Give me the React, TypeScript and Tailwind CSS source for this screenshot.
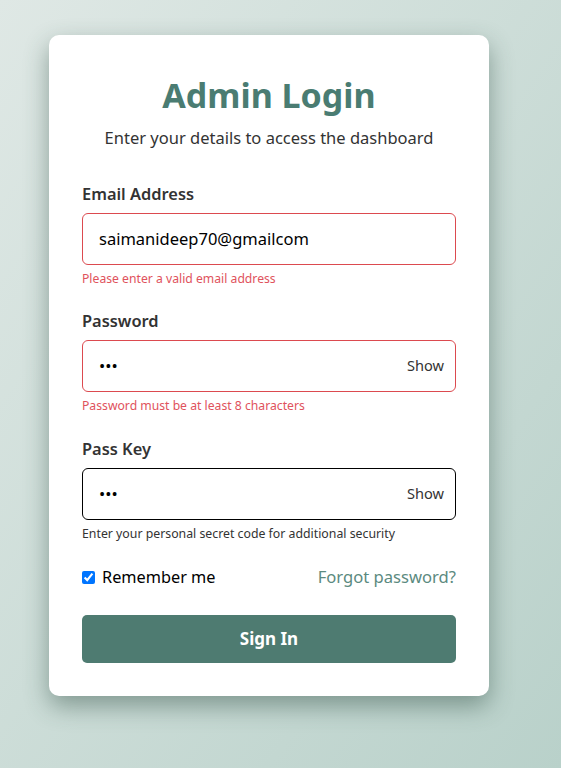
import React from "react";

export default function App() {
  const font = { fontFamily: '"Segoe UI", "Noto Sans", "Open Sans", sans-serif' };
  return (
    <div
      className="min-h-[768px] w-full bg-gradient-to-br from-[#dfe8e5] to-[#b9d1ca] pt-[35px] pl-[49px]"
      style={font}
    >
      <div className="w-[440px] rounded-[10px] bg-white px-[33px] pt-[38px] pb-[33px] shadow-[0_10px_25px_rgba(40,70,60,0.45)]">
        <h1 className="text-center text-[34px] leading-[44px] font-bold text-[#4a7c72]">Admin Login</h1>
        <p className="mt-[8px] text-center text-[16.5px] leading-[26px] text-[#333]">
          Enter your details to access the dashboard
        </p>

        <div className="mt-[32px]">
          <label className="block text-[16.4px] leading-[22px] font-semibold text-[#333]">Email Address</label>
          <div className="mt-[8px] flex h-[52px] items-center rounded-[6px] border border-[#dc4a4f] px-[16px]">
            <input
              readOnly
              value="saimanideep70@gmailcom"
              className="w-full bg-transparent text-[16.5px] text-black outline-none"
            />
          </div>
          <p className="mt-[6px] text-[12.2px] leading-[16px] text-[#e0525c]">Please enter a valid email address</p>
        </div>

        <div className="mt-[23px]">
          <label className="block text-[16.4px] leading-[22px] font-semibold text-[#333]">Password</label>
          <div className="mt-[8px] flex h-[52px] items-center rounded-[6px] border border-[#dc4a4f] pl-[16px] pr-[11px]">
            <input
              readOnly
              type="password"
              value="abc"
              className="w-full bg-transparent text-[16.5px] text-black outline-none"
            />
            <span className="text-[14.6px] text-[#333]">Show</span>
          </div>
          <p className="mt-[6px] text-[12.2px] leading-[16px] text-[#e0525c]">Password must be at least 8 characters</p>
        </div>

        <div className="mt-[24px]">
          <label className="block text-[16.4px] leading-[22px] font-semibold text-[#333]">Pass Key</label>
          <div className="mt-[8px] flex h-[52px] items-center rounded-[6px] border border-black pl-[16px] pr-[11px]">
            <input
              readOnly
              type="password"
              value="abc"
              className="w-full bg-transparent text-[16.5px] text-black outline-none"
            />
            <span className="text-[14.6px] text-[#333]">Show</span>
          </div>
          <p className="mt-[6px] text-[12.3px] leading-[16px] text-[#333]">
            Enter your personal secret code for additional security
          </p>
        </div>

        <div className="mt-[23px] flex h-[24px] items-center justify-between">
          <label className="flex items-center gap-[7px] text-[16.3px] text-black">
            <input type="checkbox" defaultChecked className="m-0 h-[13px] w-[13px] accent-[#0075ff]" />
            Remember me
          </label>
          <span className="text-[16.6px] text-[#5b8a80]">Forgot password?</span>
        </div>

        <button className="mt-[26px] h-[48px] w-full rounded-[5px] bg-[#4e7b71] text-[17px] font-bold text-white">
          Sign In
        </button>
      </div>
    </div>
  );
}
